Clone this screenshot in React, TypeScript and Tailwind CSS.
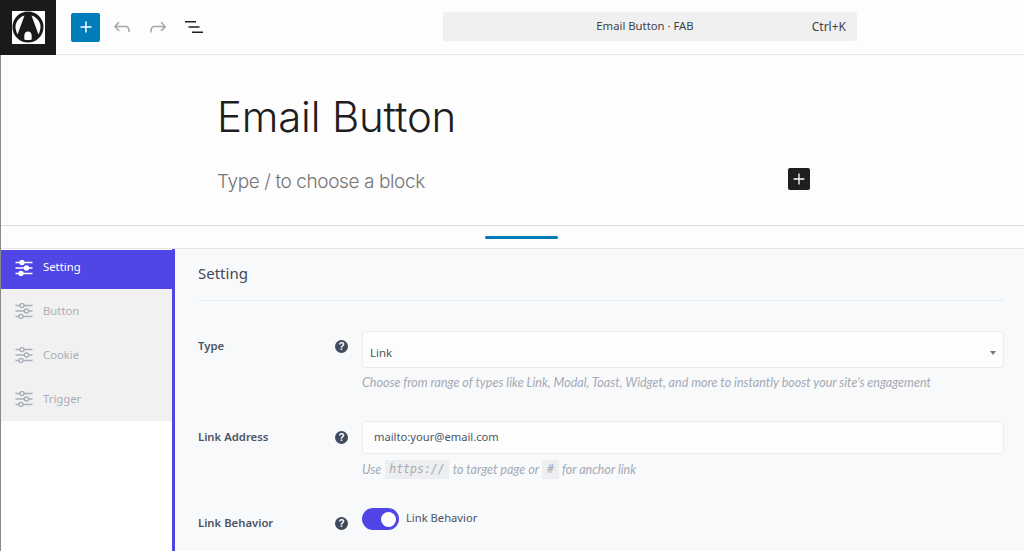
import React from "react";

const Sliders = ({ className }: { className: string }) => (
  <svg viewBox="0 0 18 16" width="18" height="16" fill="none" className={className}>
    <path d="M0.5 2.5h17M0.5 8h17M0.5 13.5h17" stroke="currentColor" strokeWidth="1.6" />
    <circle cx="7" cy="2.5" r="2" fill="#fff" fillOpacity="0.9" stroke="currentColor" strokeWidth="1.4" />
    <circle cx="11.5" cy="8" r="2" fill="#fff" fillOpacity="0.9" stroke="currentColor" strokeWidth="1.4" />
    <circle cx="6" cy="13.5" r="2" fill="#fff" fillOpacity="0.9" stroke="currentColor" strokeWidth="1.4" />
  </svg>
);

const Help = () => (
  <span className="mt-[2px] flex h-[13px] w-[13px] items-center justify-center rounded-full bg-[#3f4a5a] font-['Liberation_Sans',sans-serif] text-[10px] leading-none font-bold text-white">
    ?
  </span>
);

const Tab = ({ label, active }: { label: string; active?: boolean }) => (
  <div
    className={
      active
        ? "flex h-[39px] items-center gap-[10px] bg-[#4f46e5] pb-[4px] pl-[14px] text-white"
        : "flex h-[44px] items-center gap-[10px] pl-[14px] text-[#a9aeb8]"
    }
  >
    <Sliders className="" />
    <span className="text-[11.3px]">{label}</span>
  </div>
);

const App = () => {
  return (
    <div className="flex h-[551px] w-[1024px] flex-col overflow-hidden bg-[#fdfdfd] font-['Noto_Sans',sans-serif]">
      {/* top bar */}
      <header className="relative flex h-[55px] shrink-0 items-center border-b border-[#e4e4e4]">
        <div className="flex h-[55px] w-[56px] items-center justify-center bg-[#1a1a1a]">
          <div className="flex h-[33px] w-[33px] items-center justify-center bg-white">
            <svg viewBox="0 0 32 32" width="32" height="32">
              <circle cx="16" cy="16" r="15.500" fill="#1a1a1a" />
              <path d="M12.500 4.500 Q6 6.500 3.800 13 Q2.800 18 5.500 23.500 Z" fill="#fff" />
              <path d="M19.500 4.500 Q26 6.500 28.200 13 Q29.200 18 26.500 23.500 Z" fill="#fff" />
              <path d="M12.300 28.500 V25 Q12.300 20.500 16 20.500 Q19.700 20.500 19.700 25 V28.500 Q16 29.500 12.300 28.500 Z" fill="#fff" />
            </svg>
          </div>
        </div>
        <button className="ml-[15px] flex h-[29px] w-[29px] items-center justify-center rounded-[2px] bg-[#007cba]">
          <svg viewBox="0 0 24 24" width="24" height="24" fill="#fff">
            <path d="M11.2 6.500h1.500v4.700h4.800v1.500h-4.800v4.800h-1.500v-4.800H6.500v-1.500h4.700z" />
          </svg>
        </button>
        <div className="ml-[10px] flex items-center gap-[12px]">
          <svg viewBox="0 0 24 24" width="24" height="24" fill="#a7a7a7">
            <path d="M18.300 11.700c-.6-.6-1.400-.9-2.300-.9H6.700l2.900-3.300-1.100-1L4 11.500l4.500 5 1.100-1-2.900-3.200H16c.5 0 .9.2 1.300.5.9.9 1 2.300 1 3.200v1h1.500v-1c0-1.400-.2-3.100-1.500-4.300z" />
          </svg>
          <svg viewBox="0 0 24 24" width="24" height="24" fill="#a7a7a7">
            <path d="M15.600 6.500l-1.100 1 2.900 3.300H8c-.9 0-1.700.3-2.300.9-1.400 1.500-1.400 4.200-1.400 5.600v.2h1.500v-.3c0-1.100 0-3.500 1-4.500.3-.3.700-.5 1.300-.5h9.200L14.500 15.500l1.100 1.100 4.600-4.600-4.600-5.500z" />
          </svg>
          <svg viewBox="0 0 24 24" width="24" height="24" fill="#1e1e1e">
            <path d="M3 6h11v1.500H3zM6.500 11.250h11v1.500h-11zM10 16.500h11V18H10z" />
          </svg>
        </div>
        <div className="absolute top-[12px] left-[443px] flex h-[29px] w-[414px] items-center justify-center rounded-[3px] bg-[#f0f0f0] text-[11.3px] text-[#3c434a]">
          <span className="mr-[10px] -mt-[1px]">Email Button · FAB</span>
          <span className="absolute right-[11px] text-[12px]">Ctrl+K</span>
        </div>
      </header>

      <div className="flex min-h-0 flex-1 flex-col border-l border-[#8a8a8a]">
        {/* editor canvas */}
        <section className="flex h-[171px] shrink-0 flex-col border-b border-[#dcdcdc] pl-[216px]">
          <h1 className="mt-[37px] font-['Inter',sans-serif] text-[42px] leading-[50px] font-light tracking-[-0.2px] text-[#1e1e1e]">
            Email Button
          </h1>
          <div className="relative mt-[26px] w-[593px]">
            <p className="font-['Inter',sans-serif] text-[19px] leading-[28px] font-light tracking-[-0.4px] text-[#757575]">
              Type / to choose a block
            </p>
            <button className="absolute top-0 right-0 flex h-[22px] w-[22px] items-center justify-center rounded-[2px] bg-[#1e1e1e]">
              <svg viewBox="0 0 24 24" width="20" height="20" fill="#fff">
                <path d="M11.2 5.500h1.600v5.700h5.700v1.600h-5.700v5.700h-1.600v-5.700H5.500v-1.600h5.700z" />
              </svg>
            </button>
          </div>
        </section>

        {/* resize handle */}
        <div className="flex h-[23px] shrink-0 items-center justify-center border-b border-[#e6e6e6] pl-[18px]">
          <div className="h-[3px] w-[73px] rounded-full bg-[#007cba]" />
        </div>

        {/* meta box */}
        <section className="flex min-h-0 flex-1 bg-[#f8f9fb]">
          <aside className="w-[174px] shrink-0 border-r-[3px] border-[#4f46e5] bg-white pt-px">
            <Tab label="Setting" active />
            <div className="bg-[#f1f1f1]">
              <Tab label="Button" />
              <Tab label="Cookie" />
              <Tab label="Trigger" />
            </div>
          </aside>

          <div className="min-w-0 flex-1 pr-[20px] pl-[23px]">
            <h2 className="flex h-[52px] items-center border-b border-[#e9ecef] pb-[2px] text-[15px] font-normal text-[#3f4a5a]">
              Setting
            </h2>

            <div className="mt-[30px] flex">
              <div className="flex w-[164px] shrink-0 pt-[7px] pr-[14px]">
                <span className="flex-1 text-[11.3px] leading-[15px] font-semibold text-[#4b5563]">Type</span>
                <Help />
              </div>
              <div className="flex-1">
                <div className="flex h-[37px] items-end justify-between rounded-[3px] border border-[#e9ecef] bg-[#fdfdfd] pr-[7px] pb-[5px] pl-[7px] text-[11.5px] leading-[18px] text-[#4b5563]">
                  Link
                  <span className="mb-[7px] h-0 w-0 border-x-[3.5px] border-t-[4px] border-x-transparent border-t-[#777]" />
                </div>
                <p className="mt-[7px] font-['Lato',sans-serif] text-[12.5px] leading-[16px] text-[#a4aab4] italic">
                  Choose from range of types like Link, Modal, Toast, Widget, and more to instantly boost your site's engagement
                </p>
              </div>
            </div>

            <div className="mt-[30px] flex">
              <div className="flex w-[164px] shrink-0 pt-[8px] pr-[14px]">
                <span className="flex-1 text-[11.3px] leading-[15px] font-semibold text-[#4b5563]">Link Address</span>
                <Help />
              </div>
              <div className="flex-1">
                <div className="flex h-[33px] items-center rounded-[3px] border border-[#e9ecef] bg-[#fdfdfd] pl-[11px] text-[11.2px] text-[#4b5563]">
                  mailto:your@email.com
                </div>
                <p className="mt-[6px] flex items-center font-['Lato',sans-serif] text-[12.5px] leading-[19px] text-[#a4aab4] italic">
                  Use
                  <code className="mx-[4px] bg-[#eceef0] px-[4px] font-['DejaVu_Sans_Mono',monospace] text-[11.5px] font-normal">https://</code>
                  to target page or
                  <code className="mx-[3px] bg-[#eceef0] px-[5px] font-['DejaVu_Sans_Mono',monospace] text-[11.5px]">#</code>
                  for anchor link
                </p>
              </div>
            </div>

            <div className="mt-[29px] flex">
              <div className="flex w-[164px] shrink-0 pt-[7px] pr-[14px]">
                <span className="flex-1 text-[11.3px] leading-[15px] font-semibold text-[#4b5563]">Link Behavior</span>
                <Help />
              </div>
              <div className="flex items-center gap-[7px] self-start">
                <div className="flex h-[22px] w-[37px] items-center justify-end rounded-full bg-[#4f46e5] pr-[3px]">
                  <div className="h-[15px] w-[15px] rounded-full bg-white" />
                </div>
                <span className="mb-[2px] text-[11.2px] text-[#4b5563]">Link Behavior</span>
              </div>
            </div>
          </div>
        </section>
      </div>
    </div>
  );
};

export default App;
